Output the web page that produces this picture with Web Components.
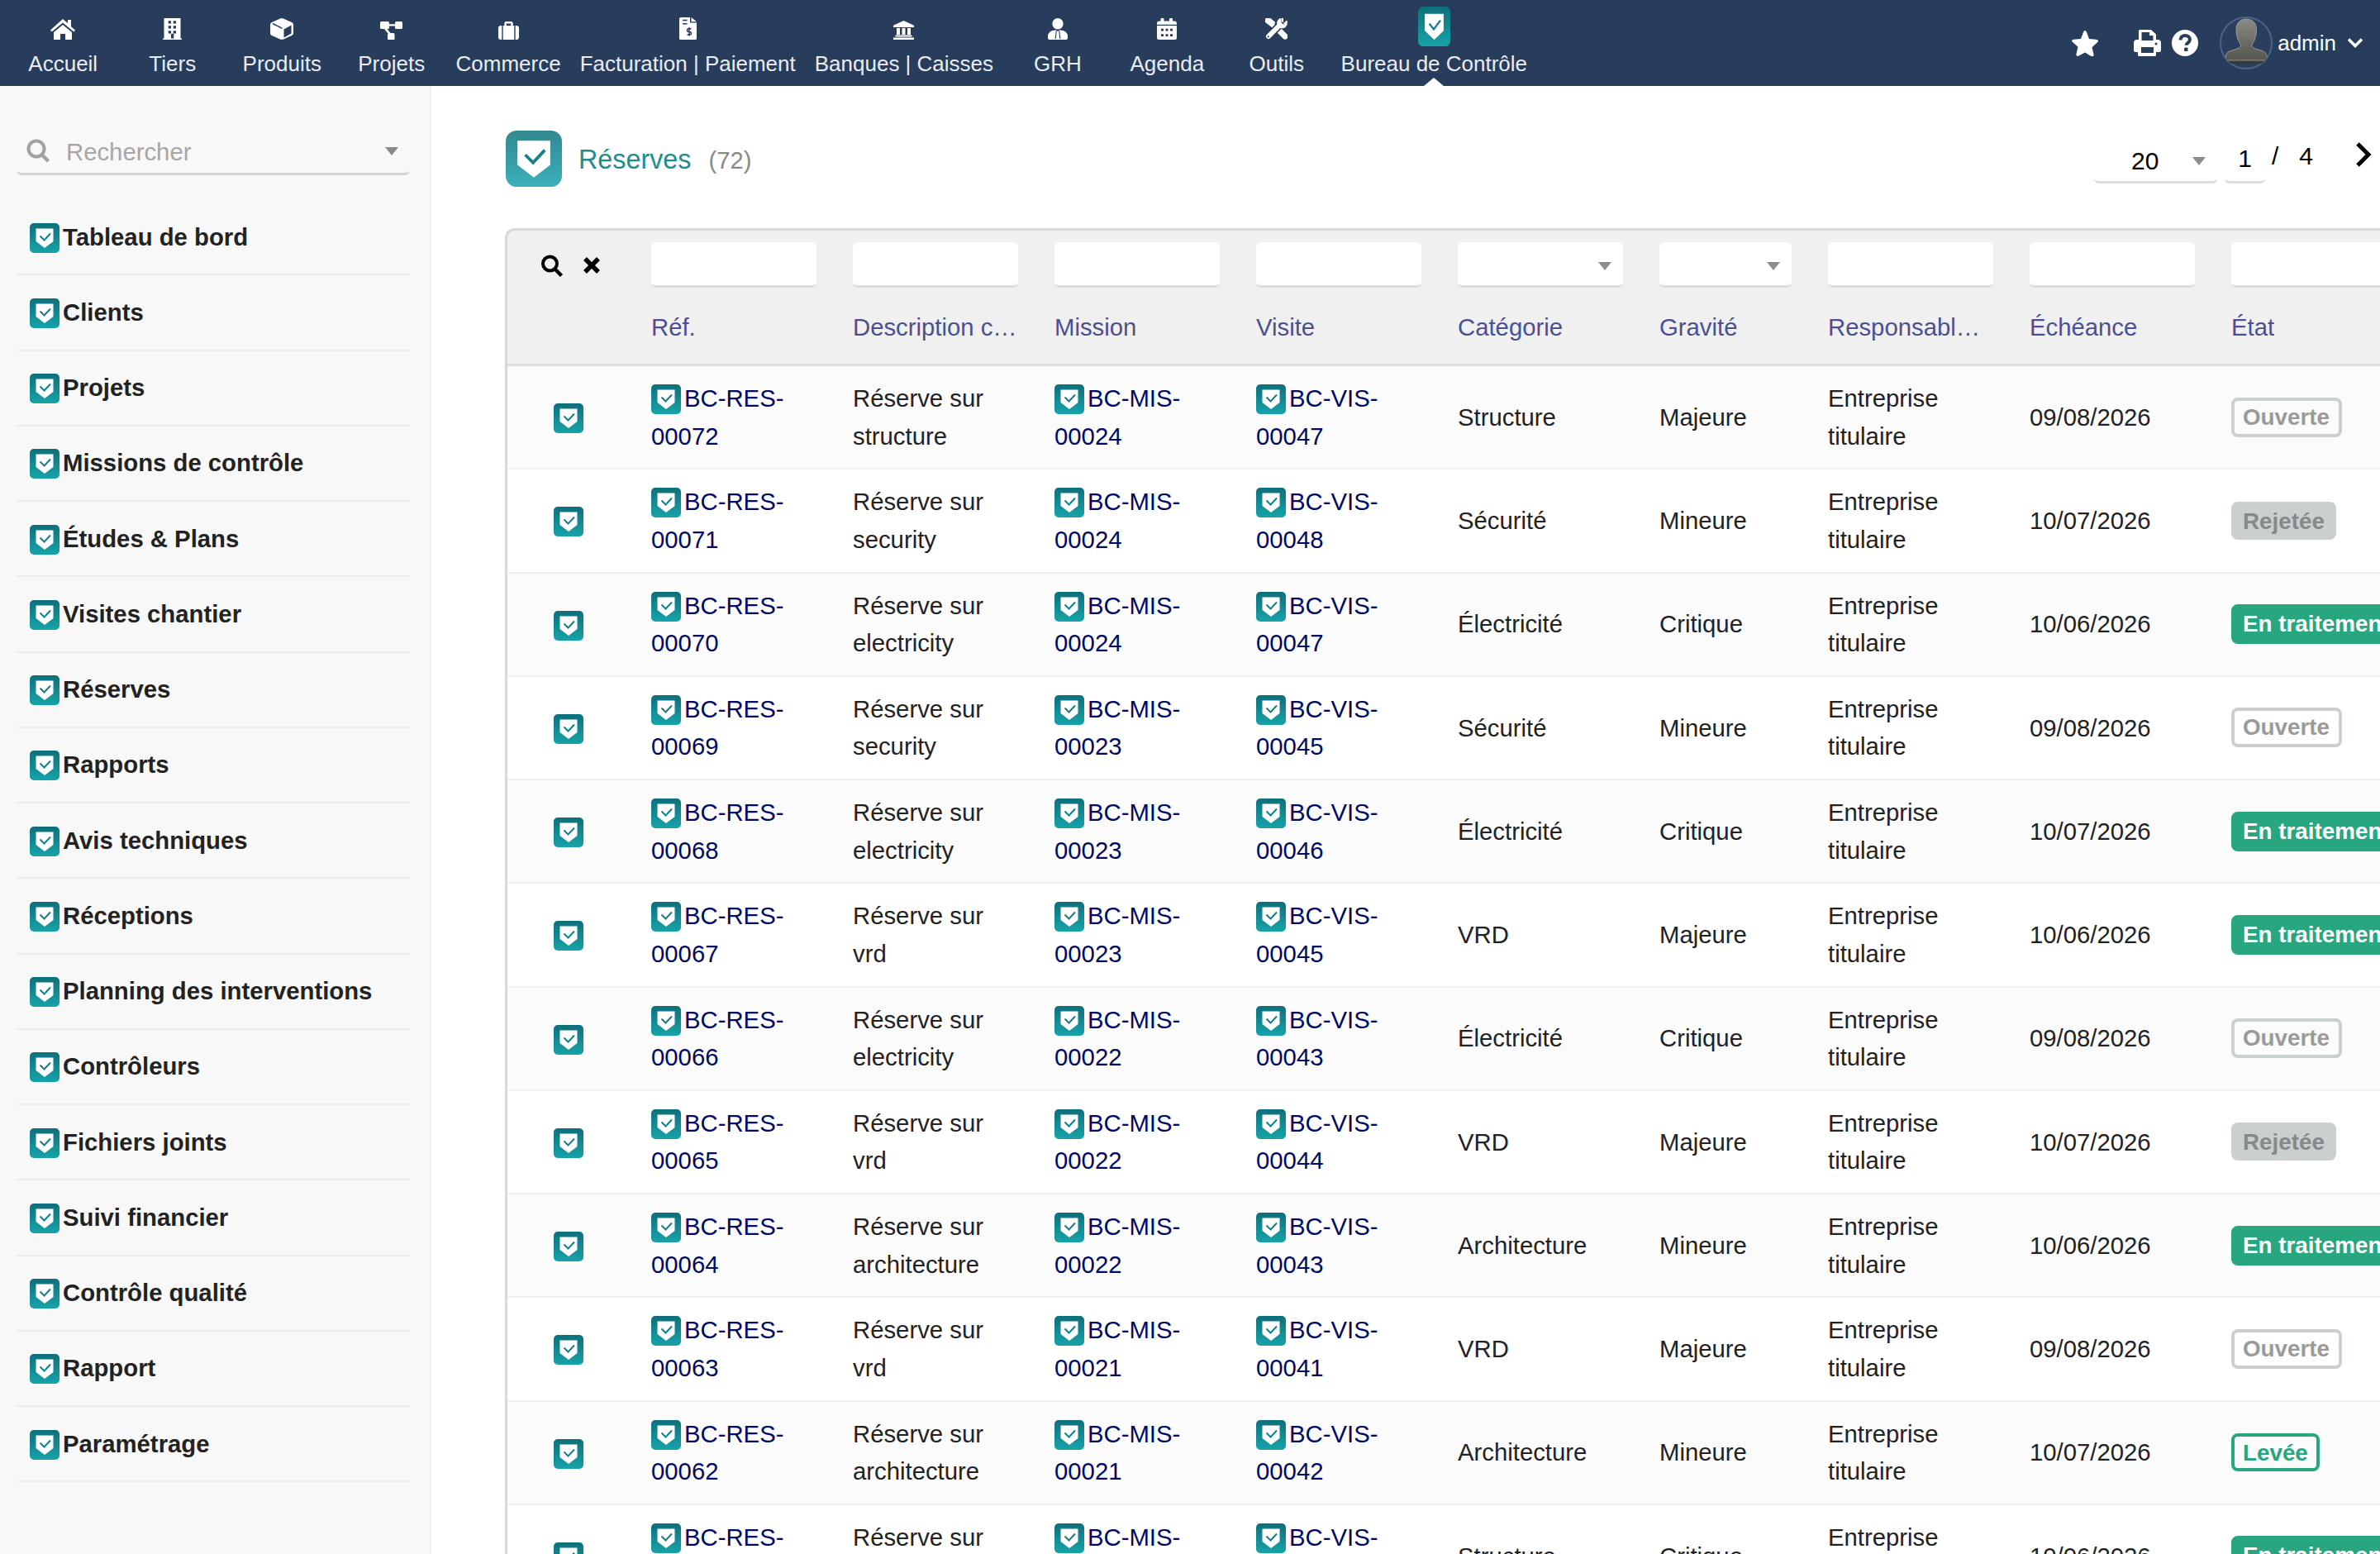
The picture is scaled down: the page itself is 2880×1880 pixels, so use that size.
<!DOCTYPE html>
<html lang="fr"><head><meta charset="utf-8"><title>Réserves</title>
<style>
html,body{margin:0;padding:0;background:#fff;overflow:hidden}
body{font-family:"Liberation Sans",Arial,sans-serif;color:#222;width:2880px;height:1880px}
</style></head><body>
<app-shell></app-shell>
<script>
const NAVY='#283c5c';
const ICONS={
home:[30,25,'<path d="M15 0l6 5V1h4v8.200l5 4.300-1.600 2L15 4.600 1.600 15.500 0 13.500z"/><path d="M15 7l11 9v9h-8v-7h-6v7H4v-9z"/>'],
building:[23,26,`<path fill-rule="evenodd" d="M1.500 0h20v24.500h1.500V26H0v-1.500h1.500zM6.700 3.300v3.300H10V3.300zm6 0v3.300H16V3.300zM6.700 9.300v3.300H10V9.300zm6 0v3.300H16V9.300zM6.700 15.300v3.300H10v-3.300zm6 0v3.300H16v-3.300zM10 18.700v5.800h3.300v-5.800z"/>`],
cube:[28,26,`<path d="M14 0l2 .6 10 4.400c1.200.5 2 1.600 2 3v10c0 1.400-.8 2.500-2 3l-10 4.400c-1.300.6-2.700.6-4 0L2 21c-1.200-.5-2-1.600-2-3V8c0-1.400.8-2.500 2-3L12 .6z"/><path d="M3 6.500l11.500 5.800" fill="none" stroke="${NAVY}" stroke-width="1.500"/><path d="M16.500 13.500l9-5v10l-9 5z" fill="${NAVY}"/>`],
diagram:[27,22,'<rect width="11" height="9" rx="1.500"/><rect x="18" width="9" height="9" rx="1.500"/><rect x="9" y="14" width="8.500" height="8.500" rx="1.500"/><path d="M11 3.300h7v2.200h-7zM5 9h3.500l4 5H9z"/>'],
case:[25,22,'<path fill-rule="evenodd" d="M7.300 5V2.200A2.200 2.200 0 0 1 9.500 0h6a2.200 2.200 0 0 1 2.200 2.200V5h1.600v17H5.700V5zm2.500 0h5.400V2.500H9.800zM0 8a3 3 0 0 1 3-3h1.300v17H3a3 3 0 0 1-3-3zM20.700 5H22a3 3 0 0 1 3 3v11a3 3 0 0 1-3 3h-1.300z"/>'],
invoice:[21,27,`<path d="M0 1.500A1.500 1.500 0 0 1 1.500 0H13v6.500h8v19a1.500 1.500 0 0 1-1.500 1.500h-18A1.500 1.500 0 0 1 0 25.500z"/><path d="M14.500 0 21 5.200h-6.500z"/><path d="M4 3.500h5.500M4 7.800h5.500" stroke="${NAVY}" stroke-width="1.500"/><path d="M14.500 13.800h-3.200a1.800 1.800 0 0 0 0 3.600h1.400a1.800 1.800 0 0 1 0 3.600H9.500M12 12v10.500" fill="none" stroke="${NAVY}" stroke-width="1.500"/>`],
bank:[25,23,'<path d="M12.500 0L25 5.800V8H0V5.800zM4 9h4v8H4zM10.500 9h4v8h-4zM17 9h4v8h-4zM2.500 17.500h20v2h-20zM0 20.500h25V23H0z"/>'],
user:[24,26,`<circle cx="12" cy="6.700" r="6.700"/><path d="M7 14.800 9.300 14.300 12 16l2.700-1.700 2.300.5c4 .7 7 3 7 7V24a2 2 0 0 1-2 2H2a2 2 0 0 1-2-2v-2.200c0-4 3-6.300 7-7z"/><path d="M10.200 15.500 9.200 25M13.800 15.500 14.800 25" stroke="${NAVY}" stroke-width="1.100" fill="none"/>`],
cal:[24,26,'<path fill-rule="evenodd" d="M4.500 1a1 1 0 0 1 1-1h2a1 1 0 0 1 1 1v2.500h6.500V1a1 1 0 0 1 1-1h2a1 1 0 0 1 1 1v2.500H21a3 3 0 0 1 3 3v1.300H0V6.500a3 3 0 0 1 3-3h1.500zM0 9h24v14.500a2.500 2.500 0 0 1-2.500 2.500h-19A2.500 2.500 0 0 1 0 23.500zM5 12.700v2.800h3v-2.800zm5.500 0v2.800h3v-2.800zm5.500 0v2.800h3v-2.800zM5 19.200V22h3v-2.800zm5.500 0V22h3v-2.800zm5.500 0V22h3v-2.800z"/>'],
tools:[27,26,`<path d="M1 3l2.500-2.500 6 5-1 3zM8 7l14.500 14" stroke="#fff" stroke-width="4.500" fill="#fff"/><path d="M16 14l8 8" stroke="#fff" stroke-width="7" stroke-linecap="round"/><path d="M4 22L18.500 7.500" stroke="${NAVY}" stroke-width="9"/><path d="M4 22L18.500 7.500" stroke="#fff" stroke-width="6" stroke-linecap="round"/><circle cx="20.500" cy="6" r="6.300" fill="#fff"/><path d="M19.500-1v6.500l3.500 2.500 5-4.500V-1z" fill="${NAVY}"/><path d="M20 0h2v5l-2-.5zM26 2.500l1 2-4 3.500-1-1.500z" fill="#fff"/><circle cx="3.700" cy="22.300" r="1.100" fill="${NAVY}"/>`],
};
const shield=(w,h,id,cls='')=>{
  const g=cls==='big'?['#338890','#3bb0bb']:['#0e6f7c','#17a3a9'];
  const r=cls==='big'?7:5;
  return `<svg width="${w}" height="${h}" viewBox="0 0 36 36" preserveAspectRatio="none" style="display:block;flex:none"><defs><linearGradient id="${id}" x1="0" y1="0" x2="0" y2="1"><stop offset="0" stop-color="${g[0]}"/><stop offset="1" stop-color="${g[1]}"/></linearGradient></defs><rect width="36" height="36" rx="${r}" fill="url(#${id})"/><path d="M7.500 6.500h21V22L18 30 7.500 22z" fill="#fff"/><path d="M12.500 15.500l5 5 7.500-8" fill="none" stroke="#14808a" stroke-width="2"/></svg>`;
};
let uid=0;
class Base extends HTMLElement{
  render(css,html){ if(!this.shadowRoot)this.attachShadow({mode:'open'}); this.shadowRoot.innerHTML=`<style>${css}</style>${html}`; }
}
class ShieldIcon extends Base{
  connectedCallback(){
    const w=+this.getAttribute('w')||36,h=+this.getAttribute('h')||w;
    this.render(':host{display:inline-block;line-height:0}',shield(w,h,'s'+(uid++),this.getAttribute('kind')||''));
  }
}
class NavItem extends Base{
  connectedCallback(){
    const ic=this.getAttribute('icon'),active=this.hasAttribute('active');
    let svg='';
    if(ic==='shield') svg='<shield-icon w="39" h="48" style="margin:-12px 0 -8px"></shield-icon>';
    else{const [w,h,p]=ICONS[ic];svg=`<svg width="${w}" height="${h}" viewBox="0 0 ${w} ${h}" fill="#fff" style="overflow:hidden">${p}</svg>`;}
    this.render(`:host{display:flex;flex-direction:column;align-items:center;box-sizing:border-box;min-width:132.5px;padding:20px 11.5px 0;position:relative;color:#e9ecf1;font-size:26px;white-space:nowrap}
      .i{height:28px;display:flex;align-items:flex-end;justify-content:center}
      .l{margin-top:14px;line-height:30px}
      ${active?`:host::after{content:"";position:absolute;left:50%;bottom:0;margin-left:-12px;border:12px solid transparent;border-top:0;border-bottom:10px solid #fff}`:''}`,
      `<div class="i">${svg}</div><div class="l"><slot></slot></div>`);
  }
}
class TopBar extends Base{
  connectedCallback(){
    const nav=[['Accueil','home'],['Tiers','building'],['Produits','cube'],['Projets','diagram'],['Commerce','case'],['Facturation | Paiement','invoice'],['Banques | Caisses','bank'],['GRH','user'],['Agenda','cal'],['Outils','tools'],['Bureau de Contrôle','shield']];
    this.render(`:host{display:flex;flex:none;height:104px;background:${NAVY};align-items:stretch;padding-left:10px}
      nav{display:flex}
      .r{margin-left:auto;display:flex;align-items:center;color:#fff;font-size:26px;padding-right:20px}
      .r svg{display:block;flex:none}
      .admin{margin:0 13px 0 6px}`,
      `<nav>${nav.map((n,i)=>`<nav-item icon="${n[1]}" ${i==10?'active':''}>${n[0]}</nav-item>`).join('')}</nav>
      <div class="r">
        <svg width="32" height="31" viewBox="0 0 32 31" fill="#fff"><path d="M16 0c1 0 1.500.7 2 2l3 8 8.500.8c2.500.3 3.200 2 1.500 3.500l-6.500 6 2 8.500c.5 2.200-1 3.300-3 2.200L16 26.500 8.500 30.500c-2 1.100-3.500 0-3-2.200l2-8.500-6.500-6C-.7 12.800 0 11.100 2.500 10.800L11 10l3-8c.5-1.300 1-2 2-2z"/></svg>
        <svg style="margin-left:43px" width="33" height="32" viewBox="0 0 33 32" fill="#fff"><path fill-rule="evenodd" d="M6 1.500A1.500 1.500 0 0 1 7.500 0H21l6 5.500V12h2a4 4 0 0 1 4 4v9a2 2 0 0 1-2 2h-4v3.500a1.500 1.500 0 0 1-1.500 1.500h-19A1.500 1.500 0 0 1 5 30.500V27H2a2 2 0 0 1-2-2v-9a4 4 0 0 1 4-4h2zM9.500 3v10h14V7H19V3zM9 21v7h15v-7zM27 15.500a1.500 1.500 0 1 0 0 3 1.500 1.500 0 0 0 0-3z"/></svg>
        <svg style="margin-left:13px" width="32" height="32" viewBox="0 0 32 32"><circle cx="16" cy="16" r="16" fill="#fff"/><path d="M10.500 12.500c0-3.200 2.400-5.500 5.700-5.500 3.300 0 5.700 2 5.700 4.800 0 4.200-4.400 3.700-4.400 7" fill="none" stroke="${NAVY}" stroke-width="4"/><rect x="15" y="21.500" width="4.500" height="4.500" rx="1" fill="${NAVY}"/></svg>
        <svg style="margin-left:26px" width="64" height="64" viewBox="0 0 64 64"><defs><clipPath id="av"><circle cx="32" cy="32" r="31"/></clipPath><linearGradient id="hd" x1="0" y1="0" x2="0" y2="1"><stop offset="0" stop-color="#8c8c87"/><stop offset=".55" stop-color="#6c6c66"/><stop offset="1" stop-color="#57574e"/></linearGradient></defs><circle cx="32" cy="32" r="31" fill="#2a3e5e" stroke="#4c6384" stroke-width="2"/><g clip-path="url(#av)"><rect x="7" y="53" width="50" height="4" fill="#33393f"/><path d="M32 3c8 0 12.500 5 12.500 13 0 7-2 13-5 17-1 2 0 5 4 6l9 3c3 1 5 4 5 11H7c0-7 2-10 5-11l9-3c4-1 5-4 4-6-3-4-5-10-5-17 0-8 4.500-13 12-13z" fill="url(#hd)" stroke="#a9a9a2" stroke-width=".8"/></g></svg>
        <span class="admin">admin</span>
        <svg width="20" height="14" viewBox="0 0 20 14"><path d="M2 2.500l8 8 8-8" fill="none" stroke="#fff" stroke-width="3.500"/></svg>
      </div>`);
  }
}
class SideItem extends Base{
  connectedCallback(){
    this.render(`:host{display:flex;align-items:center;box-sizing:border-box;height:91.25px;border-bottom:2px solid #ececec;padding:2px 0 0 16px;font-weight:700;font-size:29.3px;color:#222;white-space:nowrap}
      span{margin:-2px 0 0 4px}`,`<shield-icon w="36"></shield-icon><span><slot></slot></span>`);
  }
}
class SideBar extends Base{
  connectedCallback(){
    const items=['Tableau de bord','Clients','Projets','Missions de contrôle','Études &amp; Plans','Visites chantier','Réserves','Rapports','Avis techniques','Réceptions','Planning des interventions','Contrôleurs','Fichiers joints','Suivi financier','Contrôle qualité','Rapport','Paramétrage'];
    this.render(`:host{display:block;flex:none;box-sizing:border-box;width:522px;background:#f8f8f8;border-right:2px solid #efefef;padding:46px 24px 0 20px}
      .s{display:flex;align-items:center;height:62px;box-sizing:border-box;border-bottom:3px solid #d3d3d3;border-radius:0 0 6px 6px;padding:6px 14px 0 12px;color:#a6a6a6;font-size:29.3px;margin-bottom:30px}
      .s span{margin-left:19px;flex:1;padding-top:2px}
      svg{display:block}`,
      `<div class="s"><svg width="29" height="30" viewBox="0 0 29 30"><circle cx="12" cy="12" r="9.500" fill="none" stroke="#a2a2a2" stroke-width="4"/><path d="M18.500 19l8 8" stroke="#a2a2a2" stroke-width="4.500"/></svg><span>Rechercher</span><svg width="16" height="10" viewBox="0 0 16 10"><path d="M0 0h16L8 10z" fill="#8a8a8a"/></svg></div>
      ${items.map(t=>`<side-item>${t}</side-item>`).join('')}`);
  }
}
class ListHead extends Base{
  connectedCallback(){
    this.render(`:host{display:flex;align-items:center;height:68px;color:#000;margin-left:1px}
      .t{color:#1f8c90;font-size:32.3px;margin-left:20px;margin-top:2px}
      .c{color:#8a8a8a;font-size:29.3px;margin-left:21px;margin-top:3px}
      .p{margin-left:auto;display:flex;align-items:flex-start;font-size:30px;padding-right:10px}
      .sel,.pg{box-sizing:border-box;height:52px;margin-top:8px;border-bottom:3px solid #dcdcdc;border-radius:0 0 6px 6px;display:flex;align-items:center}
      .sel{width:149px;padding-left:45px}
      .sel i{margin-left:41px;width:0;height:0;border:8px solid transparent;border-top:10px solid #8c8c8c;border-bottom:0}
      .pg{width:49px;margin-left:9px;justify-content:center;padding-bottom:6px}
      .sl{margin:0 25px 0 8px;padding-top:10px}.n{padding-top:10px;margin-right:51px}
      svg{display:block;flex:none}
      .nx{margin-top:10px}`,
      `<shield-icon w="68" kind="big"></shield-icon><span class="t">Réserves</span><span class="c">(72)</span>
      <div class="p"><div class="sel"><span>20</span><i></i></div><div class="pg">1</div><span class="sl">/</span><span class="n">4</span><svg class="nx" width="20" height="30" viewBox="0 0 20 30"><path d="M3 2l13 13L3 28" fill="none" stroke="#000" stroke-width="5"/></svg></div>`);
  }
}
const COLS='grid-template-columns:174px 244px 244px 244px 244px 244px 204px 244px 244px 310px;';
class StatusBadge extends Base{
  connectedCallback(){
    const k=this.getAttribute('kind');
    const st={o:'border:4px solid #c9d0ce;color:#9a9a9a;background:transparent',r:'border:4px solid #c9d0ce;color:#858a89;background:#c9d0ce',e:'border:4px solid #27a680;color:#fff;background:#27a680',l:'border:4px solid #27a680;color:#27a680;background:transparent'}[k];
    this.render(`:host{display:inline-block;box-sizing:border-box;height:${k==='o'||k==='e'?48:46}px;${st};border-radius:8px;padding:0 10.5px 0 10px;font-weight:700;font-size:27.8px;line-height:40px;white-space:nowrap}`,`<slot></slot>`);
  }
}
class ResLink extends Base{
  connectedCallback(){
    this.render(`:host{color:#000a66}shield-icon{vertical-align:-9px;margin-right:4px}`,`<shield-icon w="36"></shield-icon><slot></slot>`);
  }
}
class ResRow extends Base{
  connectedCallback(){
    const d=JSON.parse(this.getAttribute('data'));
    const alt=this.hasAttribute('alt');
    const [ref,desc,mis,vis,cat,gra,date,kind,et]=d;
    this.render(`:host{display:grid;${COLS}box-sizing:border-box;height:125.25px;border-bottom:2px solid #f0f0f0;background:${alt?'#fbfbfb':'#fff'};align-items:center;font-size:29.3px;line-height:45.6px;color:#222}
      .c{padding-right:44px;min-width:0}
      .ic{padding-left:56px;line-height:0;padding-top:3px}`,
      `<div class="ic"><shield-icon w="36"></shield-icon></div>
       <div class="c"><res-link>BC-RES-${ref}</res-link></div>
       <div class="c">${desc}</div>
       <div class="c"><res-link>BC-MIS-${mis}</res-link></div>
       <div class="c"><res-link>BC-VIS-${vis}</res-link></div>
       <div class="c">${cat}</div><div class="c">${gra}</div>
       <div class="c">Entreprise titulaire</div>
       <div class="c">${date}</div>
       <div class="c"><status-badge kind="${kind}">${et}</status-badge></div>`);
  }
}
class ResTable extends Base{
  connectedCallback(){
    const O=['o','Ouverte'],R=['r','Rejetée'],E=['e','En traitement'],L=['l','Levée'];
    const rows=[
    ['00072','Réserve sur structure','00024','00047','Structure','Majeure','09/08/2026',O],
    ['00071','Réserve sur security','00024','00048','Sécurité','Mineure','10/07/2026',R],
    ['00070','Réserve sur electricity','00024','00047','Électricité','Critique','10/06/2026',E],
    ['00069','Réserve sur security','00023','00045','Sécurité','Mineure','09/08/2026',O],
    ['00068','Réserve sur electricity','00023','00046','Électricité','Critique','10/07/2026',E],
    ['00067','Réserve sur vrd','00023','00045','VRD','Majeure','10/06/2026',E],
    ['00066','Réserve sur electricity','00022','00043','Électricité','Critique','09/08/2026',O],
    ['00065','Réserve sur vrd','00022','00044','VRD','Majeure','10/07/2026',R],
    ['00064','Réserve sur architecture','00022','00043','Architecture','Mineure','10/06/2026',E],
    ['00063','Réserve sur vrd','00021','00041','VRD','Majeure','09/08/2026',O],
    ['00062','Réserve sur architecture','00021','00042','Architecture','Mineure','10/07/2026',L],
    ['00061','Réserve sur structure','00021','00041','Structure','Critique','10/06/2026',E]];
    const labels=['Réf.','Description c…','Mission','Visite','Catégorie','Gravité','Responsabl…','Échéance','État'];
    const sel=[4,5,8];
    this.render(`:host{display:block;box-sizing:border-box;width:2400px;border-top:3px solid #d8d8d8;border-left:3px solid #d8d8d8;border-top-left-radius:12px;background:#f0f0f0}
      .f,.h{display:grid;${COLS}}
      .f{padding-top:14px;height:55px;box-sizing:content-box}
      .f>div{padding-right:44px}
      .inp{box-sizing:border-box;height:55px;background:#fff;border-bottom:3px solid #dcdcdc;border-radius:6px;display:flex;align-items:center;justify-content:flex-end;padding:6px 14px 0 0}
      .inp i{width:0;height:0;border:8px solid transparent;border-top:10px solid #8c8c8c;border-bottom:0}
      .tool{display:flex;padding:15px 0 0 40px;gap:22px;align-items:flex-start}
      .tool svg{display:block}
      .h{height:95px;box-sizing:border-box;border-bottom:3px solid #dcdcdc;padding-top:24px;color:#4b5190;font-size:29.3px;line-height:48px;white-space:nowrap}`,
      `<div class="f"><div class="tool"><svg width="29" height="27" viewBox="0 0 29 27"><circle cx="11.500" cy="11" r="8.500" fill="none" stroke="#000" stroke-width="4"/><path d="M17.500 17.500l8 8" stroke="#000" stroke-width="4.500"/></svg><svg style="margin-top:2px" width="22" height="22" viewBox="0 0 22 22"><path d="M3 3l16 16M19 3L3 19" stroke="#000" stroke-width="5.500"/></svg></div>
      ${labels.map((l,i)=>`<div><div class="inp">${sel.includes(i)?'<i></i>':''}</div></div>`).join('')}</div>
      <div class="h"><div></div>${labels.map(l=>`<div>${l}</div>`).join('')}</div>
      ${rows.map((r,i)=>{const a=[...r.slice(0,7),r[7][0],r[7][1]];return `<res-row ${i%2==0?'alt':''} data='${JSON.stringify(a)}'></res-row>`}).join('')}`);
  }
}
class AppShell extends Base{
  connectedCallback(){
    this.render(`:host{display:flex;flex-direction:column;width:2880px;height:1880px;overflow:hidden}
      .b{display:flex;flex:1;min-height:0}
      main{flex:1;min-width:0;padding:54px 0 0 89px;overflow:hidden;background:#fff}
      res-table{margin-top:50px}`,
      `<top-bar></top-bar><div class="b"><side-bar></side-bar><main><list-head></list-head><res-table></res-table></main></div>`);
  }
}
const defs={'shield-icon':ShieldIcon,'nav-item':NavItem,'top-bar':TopBar,'side-item':SideItem,'side-bar':SideBar,'list-head':ListHead,'status-badge':StatusBadge,'res-link':ResLink,'res-row':ResRow,'res-table':ResTable,'app-shell':AppShell};
for(const k in defs)customElements.define(k,defs[k]);
</script>
</body></html>
